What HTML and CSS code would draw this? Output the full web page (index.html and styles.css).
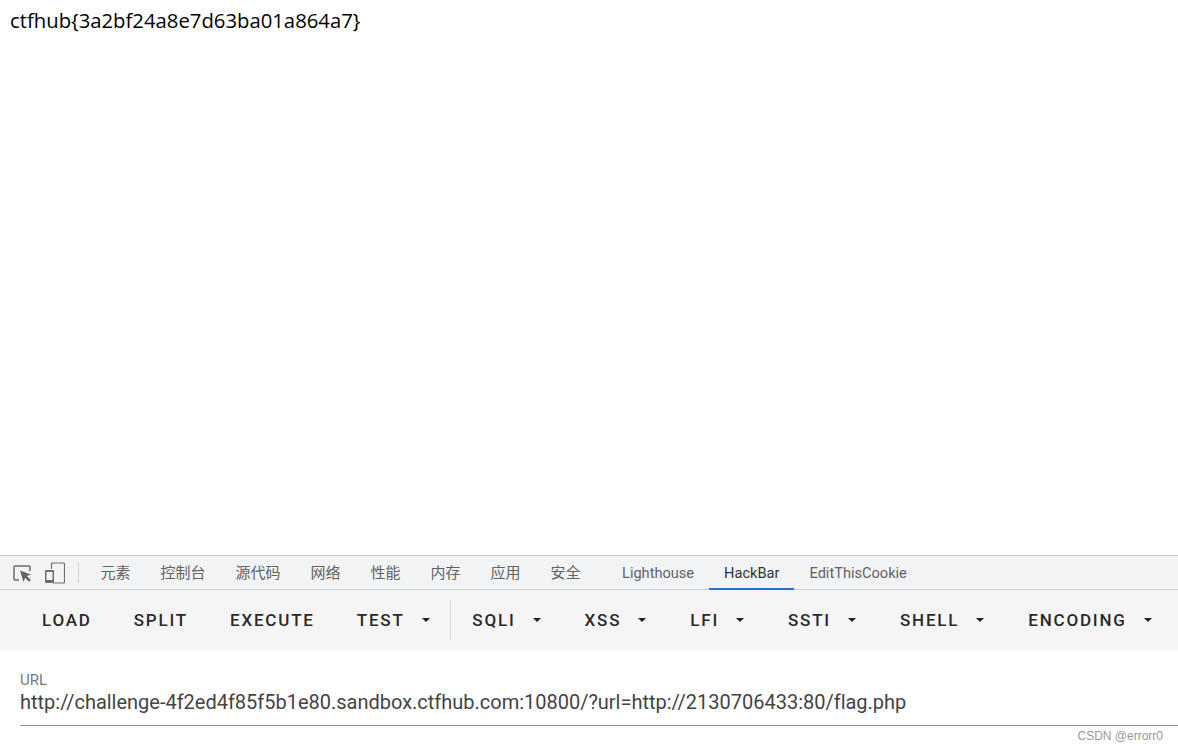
FILE: index.html
```html
<!DOCTYPE html>
<html lang="en">
<head>
  <meta charset="UTF-8" />
  <title>HackBar</title>
  <link rel="stylesheet" href="styles.css">
</head>
<body>
  <div class="page">ctfhub{3a2bf24a8e7d63ba01a864a7}</div>

  <div class="devtools">
    <div class="tabbar">
      <div class="tool-icons">
        <svg class="tool-icon" width="20" height="20" viewBox="0 0 20 20">
          <path d="M7 17H3a1 1 0 0 1-1-1V4a1 1 0 0 1 1-1h14a1 1 0 0 1 1 1v4" fill="none" stroke="#6e6e6e" stroke-width="1.5"/>
          <path d="M8 7.5l11 4-4.2 1.6 4 4-1.7 1.7-4-4L11.5 19z" fill="#5f6368"/>
        </svg>
        <svg class="tool-icon" width="20" height="22" viewBox="0 0 20 22">
          <path d="M6.5 7V2a1 1 0 0 1 1-1h11a1 1 0 0 1 1 1v18a1 1 0 0 1-1 1H8" fill="none" stroke="#6e6e6e" stroke-width="1.2"/>
          <path fill-rule="evenodd" d="M1 8h7a1 1 0 0 1 1 1v11a1 1 0 0 1-1 1H1a1 1 0 0 1-1-1V9a1 1 0 0 1 1-1zm.5 2v8h6v-8z" fill="#6e6e6e"/>
        </svg>
      </div>
      <span class="tab-sep"></span>
      <a class="tab">元素</a>
      <a class="tab">控制台</a>
      <a class="tab">源代码</a>
      <a class="tab">网络</a>
      <a class="tab">性能</a>
      <a class="tab">内存</a>
      <a class="tab">应用</a>
      <a class="tab">安全</a>
      <a class="tab tab-ext tab-first">Lighthouse</a>
      <a class="tab tab-ext active">HackBar</a>
      <a class="tab tab-ext">EditThisCookie</a>
    </div>

    <div class="toolbar">
      <button class="btn">LOAD</button>
      <button class="btn">SPLIT</button>
      <button class="btn">EXECUTE</button>
      <button class="btn menu">TEST<i class="caret"></i></button>
      <span class="toolbar-sep"></span>
      <button class="btn menu">SQLI<i class="caret"></i></button>
      <button class="btn menu">XSS<i class="caret"></i></button>
      <button class="btn menu">LFI<i class="caret"></i></button>
      <button class="btn menu">SSTI<i class="caret"></i></button>
      <button class="btn menu">SHELL<i class="caret"></i></button>
      <button class="btn menu">ENCODING<i class="caret"></i></button>
    </div>

    <div class="url-panel">
      <label class="url-label">URL</label>
      <div class="url-value">http://challenge-4f2ed4f85f5b1e80.sandbox.ctfhub.com:10800/?url=http://2130706433:80/flag.php</div>
    </div>
    <div class="watermark">CSDN @errorr0</div>
  </div>
</body>
</html>
```

FILE: styles.css
```css
* {
  box-sizing: border-box;
}

body {
  margin: 0;
  height: 750px;
  overflow: hidden;
  display: flex;
  flex-direction: column;
  background: #fff;
  font-family: Roboto, "Noto Sans CJK SC", sans-serif;
}

.page {
  height: 555px;
  padding: 7px 10px;
  font-family: "Open Sans", sans-serif;
  font-size: 20.3px;
  line-height: 26px;
  color: #000;
}

.devtools {
  flex: 1;
  display: flex;
  flex-direction: column;
}

.tabbar {
  height: 35px;
  display: flex;
  align-items: center;
  background: #f1f3f4;
  border-top: 1px solid #cbcdd1;
  border-bottom: 1px solid #cbcdd1;
}

.tool-icons {
  display: flex;
  align-items: center;
  gap: 13px;
  padding-left: 12px;
}

.tab-sep {
  width: 1px;
  height: 20px;
  margin: 0 6.4px 0 13px;
  background: #cfd1d4;
}

.tab {
  height: 100%;
  display: flex;
  align-items: center;
  padding: 0 15px 2px;
  font-size: 15px;
  color: #5f6368;
}

.tab-ext {
  padding: 1px 15px 0;
  font-size: 14.6px;
}

.tab-first {
  margin-left: 11.5px;
}

.tab.active {
  color: #333;
  border-bottom: 2px solid #1a73e8;
  margin-bottom: -1px;
}

.toolbar {
  height: 60px;
  display: flex;
  align-items: center;
  padding-left: 21px;
  background: #f5f5f5;
}

.btn {
  display: flex;
  align-items: center;
  height: 36px;
  padding: 0 21px;
  border: none;
  background: none;
  font-family: Roboto, sans-serif;
  font-size: 17px;
  font-weight: 500;
  letter-spacing: 1.8px;
  color: #2a2a2a;
  white-space: nowrap;
}

.caret {
  width: 0;
  height: 0;
  margin: 0 2px 0 17px;
  border-left: 4.5px solid transparent;
  border-right: 4.5px solid transparent;
  border-top: 4.5px solid #212121;
}

.toolbar-sep {
  width: 1px;
  height: 40px;
  margin-left: -2.3px;
  background: #d9d9d9;
}

.url-panel {
  margin-left: 20px;
  padding-top: 22px;
  height: 76px;
  border-bottom: 1px solid #8f8f8f;
}

.url-label {
  display: block;
  font-size: 15px;
  line-height: 16px;
  color: #7a7a7a;
}

.url-value {
  font-size: 20px;
  line-height: 28px;
  letter-spacing: -0.01px;
  color: #444;
  white-space: nowrap;
}

.watermark {
  padding-right: 15px;
  text-align: right;
  font-family: "Liberation Sans", sans-serif;
  font-size: 12px;
  line-height: 20px;
  color: #9a9a9a;
}
```
